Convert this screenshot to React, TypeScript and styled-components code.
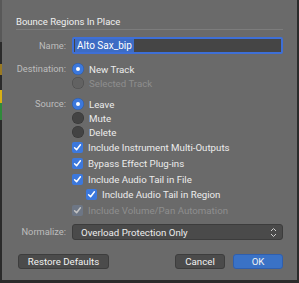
import styled, { createGlobalStyle } from "styled-components";

const Global = createGlobalStyle`
  html, body {
    margin: 0;
    padding: 0;
    background: #2b2b2b;
    width: 299px;
    height: 283px;
    overflow: hidden;
  }
  * { box-sizing: border-box; }
`;

const Screen = styled.div`
  display: flex;
  width: 299px;
  height: 283px;
  font-family: Roboto, "Liberation Sans", Arial, sans-serif;
  font-size: 9.7px;
`;

const Backdrop = styled.div`
  width: 2px;
  display: flex;
  flex-direction: column;
`;

const Strip = styled.div<{ $h: number; $c: string }>`
  height: ${(p) => p.$h}px;
  background: ${(p) => p.$c};
`;

const Dialog = styled.div`
  width: 295px;
  height: 280px;
  background: #6a6a6a;
  padding: 0 14px 0 14px;
  display: flex;
  flex-direction: column;
`;

const Title = styled.div`
  height: 30px;
  padding: 16px 0 0 0;
  color: #f0f0f0;
  font-size: 9.5px;
  border-bottom: 1px solid #7c7c7c;
`;

const Form = styled.div`
  display: grid;
  grid-template-columns: 50px 1fr;
  column-gap: 6px;
  padding-top: 7px;
`;

const Label = styled.div<{ $h?: number; $top?: number }>`
  display: flex;
  justify-content: flex-end;
  color: #bdbdbd;
  font-size: 9.3px;
  height: ${(p) => p.$h ?? 14}px;
  line-height: ${(p) => p.$h ?? 14}px;
  margin-top: ${(p) => p.$top ?? 0}px;
  white-space: nowrap;
`;

const Stack = styled.div<{ $top?: number }>`
  display: flex;
  flex-direction: column;
  margin-top: ${(p) => p.$top ?? 0}px;
`;

const Field = styled.div`
  height: 17px;
  background: #454545;
  border: 2px solid #3e6fd6;
  border-radius: 2px;
  display: flex;
  align-items: center;
  padding-left: 1px;
  font-size: 10px;
`;

const Selection = styled.span`
  background: #3d6cc4;
  color: #ffffff;
  padding: 0 2px;
  line-height: 13px;
`;

const Option = styled.div<{ $disabled?: boolean; $h?: number; $indent?: number }>`
  display: flex;
  align-items: center;
  gap: 5px;
  height: ${(p) => p.$h ?? 14}px;
  padding-left: ${(p) => p.$indent ?? 0}px;
  color: ${(p) => (p.$disabled ? "#8e8e8e" : "#ececec")};
  white-space: nowrap;
`;

const Radio = styled.span<{ $on?: boolean; $disabled?: boolean }>`
  width: 12px;
  height: 12px;
  border-radius: 50%;
  flex: none;
  background: ${(p) => (p.$on ? "#3c78dc" : p.$disabled ? "#626262" : "#434343")};
  box-shadow: inset 0 0 0 0.5px rgba(0, 0, 0, 0.25);
  display: flex;
  align-items: center;
  justify-content: center;
  &::after {
    content: "";
    width: 4px;
    height: 4px;
    border-radius: 50%;
    background: #fff;
    display: ${(p) => (p.$on ? "block" : "none")};
  }
`;

const Check = styled.span<{ $disabled?: boolean }>`
  width: 11px;
  height: 11px;
  border-radius: 2px;
  flex: none;
  background: ${(p) => (p.$disabled ? "#6f7f98" : "#3c78dc")};
  display: flex;
  align-items: center;
  justify-content: center;
  opacity: ${(p) => (p.$disabled ? 0.6 : 1)};
`;

const Popup = styled.div`
  height: 16px;
  margin-top: 6px;
  background: #4a4a4a;
  border: 1px solid #3c3c3c;
  border-radius: 3px;
  color: #ececec;
  display: flex;
  align-items: center;
  justify-content: space-between;
  padding: 0 5px 0 8px;
`;

const Footer = styled.div`
  display: flex;
  align-items: center;
  margin-top: 14px;
  padding-left: 2px;
`;

const Button = styled.button<{ $primary?: boolean; $w: number }>`
  width: ${(p) => p.$w}px;
  height: 15px;
  border-radius: 3px;
  border: 1px solid ${(p) => (p.$primary ? "#2f5fae" : "#3d3d3d")};
  background: ${(p) => (p.$primary ? "#3a72c6" : "#4b4b4b")};
  color: #f2f2f2;
  font-family: inherit;
  font-size: 9.7px;
  padding: 0;
  line-height: 13px;
`;

const Spacer = styled.div`
  flex: 1;
`;

function Tick() {
  return (
    <svg width="9" height="9" viewBox="0 0 9 9">
      <path d="M1.6 4.8 L3.6 6.8 L7.4 1.8" fill="none" stroke="#fff" strokeWidth="1.5" strokeLinecap="round" strokeLinejoin="round" />
    </svg>
  );
}

function Chevrons() {
  return (
    <svg width="7" height="11" viewBox="0 0 7 11">
      <path d="M1 4 L3.5 1.5 L6 4 M1 7 L3.5 9.5 L6 7" fill="none" stroke="#cfcfcf" strokeWidth="1" />
    </svg>
  );
}

export default function App() {
  return (
    <Screen>
      <Global />
      <Backdrop>
        <Strip $h={42} $c="#585858" />
        <Strip $h={22} $c="#2a2a2a" />
        <Strip $h={11} $c="#9a7a22" />
        <Strip $h={15} $c="#2a2a2a" />
        <Strip $h={13} $c="#d8b014" />
        <Strip $h={17} $c="#2f8a3a" />
        <Strip $h={163} $c="#2a2a2a" />
      </Backdrop>
      <Dialog>
        <Title>Bounce Regions In Place</Title>
        <Form>
          <Label $h={17}>Name:</Label>
          <Field>
            <Selection>Alto Sax_bip</Selection>
          </Field>

          <Label $top={8}>Destination:</Label>
          <Stack $top={8}>
            <Option>
              <Radio $on />
              New Track
            </Option>
            <Option $disabled>
              <Radio $disabled />
              Selected Track
            </Option>
          </Stack>

          <Label $top={7}>Source:</Label>
          <Stack $top={7}>
            <Option>
              <Radio $on />
              Leave
            </Option>
            <Option>
              <Radio />
              Mute
            </Option>
            <Option>
              <Radio />
              Delete
            </Option>
          </Stack>

          <div />
          <Stack $top={1}>
            <Option $h={15.7}>
              <Check>
                <Tick />
              </Check>
              Include Instrument Multi-Outputs
            </Option>
            <Option $h={15.7}>
              <Check>
                <Tick />
              </Check>
              Bypass Effect Plug-ins
            </Option>
            <Option $h={15.7}>
              <Check>
                <Tick />
              </Check>
              Include Audio Tail in File
            </Option>
            <Option $h={15.7} $indent={14}>
              <Check>
                <Tick />
              </Check>
              Include Audio Tail in Region
            </Option>
            <Option $h={15.7} $disabled>
              <Check $disabled>
                <Tick />
              </Check>
              Include Volume/Pan Automation
            </Option>
          </Stack>

          <Label $h={16} $top={6}>Normalize:</Label>
          <Popup>
            Overload Protection Only
            <Chevrons />
          </Popup>
        </Form>
        <Footer>
          <Button $w={91}>Restore Defaults</Button>
          <Spacer />
          <Button $w={50}>Cancel</Button>
          <Button $w={50} $primary style={{ marginLeft: 8 }}>
            OK
          </Button>
        </Footer>
      </Dialog>
    </Screen>
  );
}
